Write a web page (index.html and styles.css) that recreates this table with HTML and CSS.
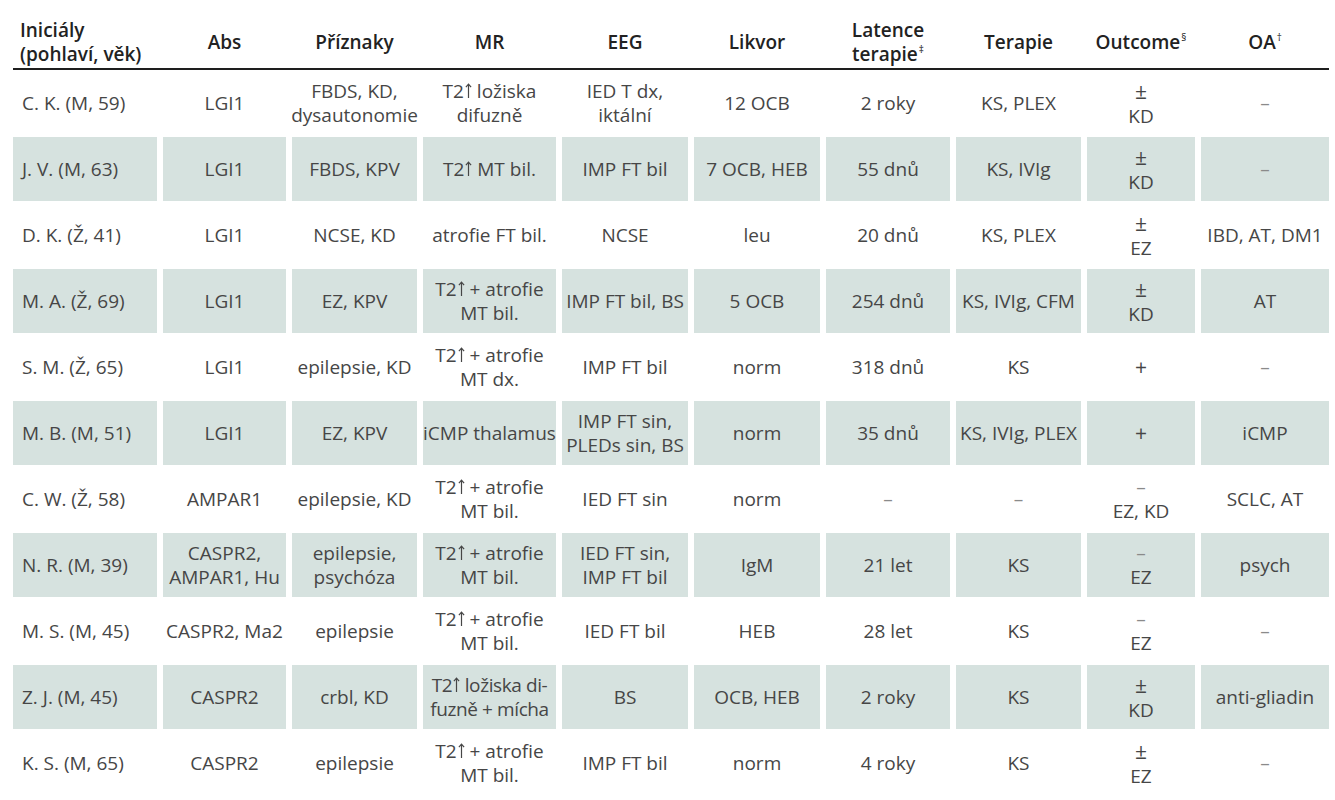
FILE: index.html
```html
<!DOCTYPE html>
<html lang="cs">
<head>
<meta charset="utf-8">
<title>Tabulka pacientů</title>
<link rel="stylesheet" href="styles.css">
</head>
<body>
<div class="table">
  <div class="thead">
    <div class="th first"><span>Iniciály<br>(pohlaví, věk)</span></div>
    <div class="th"><span>Abs</span></div>
    <div class="th"><span>Příznaky</span></div>
    <div class="th"><span>MR</span></div>
    <div class="th"><span>EEG</span></div>
    <div class="th"><span>Likvor</span></div>
    <div class="th"><span>Latence<br>terapie<sup>‡</sup></span></div>
    <div class="th"><span>Terapie</span></div>
    <div class="th"><span>Outcome<sup>§</sup></span></div>
    <div class="th"><span>OA<sup>†</sup></span></div>
  </div>
  <div class="tbody">
    <div class="row">
      <div class="td first"><span>C. K. (M, 59)</span></div>
      <div class="td"><span>LGI1</span></div>
      <div class="td"><span>FBDS, KD,<br>dysautonomie</span></div>
      <div class="td"><span>T2<svg class="up" viewBox="0 0 7 15"><path d="M3.5 15V1.2M0.9 4.2L3.5 1.2L6.1 4.2"/></svg> ložiska<br>difuzně</span></div>
      <div class="td"><span>IED T dx,<br>iktální</span></div>
      <div class="td"><span>12 OCB</span></div>
      <div class="td"><span>2 roky</span></div>
      <div class="td"><span>KS, PLEX</span></div>
      <div class="td"><span><span class="pm">±</span><br>KD</span></div>
      <div class="td dash"><span>–</span></div>
    </div>
    <div class="row alt">
      <div class="td first"><span>J. V. (M, 63)</span></div>
      <div class="td"><span>LGI1</span></div>
      <div class="td"><span>FBDS, KPV</span></div>
      <div class="td"><span>T2<svg class="up" viewBox="0 0 7 15"><path d="M3.5 15V1.2M0.9 4.2L3.5 1.2L6.1 4.2"/></svg> MT bil.</span></div>
      <div class="td"><span>IMP FT bil</span></div>
      <div class="td"><span>7 OCB, HEB</span></div>
      <div class="td"><span>55 dnů</span></div>
      <div class="td"><span>KS, IVIg</span></div>
      <div class="td"><span><span class="pm">±</span><br>KD</span></div>
      <div class="td dash"><span>–</span></div>
    </div>
    <div class="row">
      <div class="td first"><span>D. K. (Ž, 41)</span></div>
      <div class="td"><span>LGI1</span></div>
      <div class="td"><span>NCSE, KD</span></div>
      <div class="td"><span>atrofie FT bil.</span></div>
      <div class="td"><span>NCSE</span></div>
      <div class="td"><span>leu</span></div>
      <div class="td"><span>20 dnů</span></div>
      <div class="td"><span>KS, PLEX</span></div>
      <div class="td"><span><span class="pm">±</span><br>EZ</span></div>
      <div class="td"><span>IBD, AT, DM1</span></div>
    </div>
    <div class="row alt">
      <div class="td first"><span>M. A. (Ž, 69)</span></div>
      <div class="td"><span>LGI1</span></div>
      <div class="td"><span>EZ, KPV</span></div>
      <div class="td"><span>T2<svg class="up" viewBox="0 0 7 15"><path d="M3.5 15V1.2M0.9 4.2L3.5 1.2L6.1 4.2"/></svg> + atrofie<br>MT bil.</span></div>
      <div class="td"><span>IMP FT bil, BS</span></div>
      <div class="td"><span>5 OCB</span></div>
      <div class="td"><span>254 dnů</span></div>
      <div class="td"><span>KS, IVIg, CFM</span></div>
      <div class="td"><span><span class="pm">±</span><br>KD</span></div>
      <div class="td"><span>AT</span></div>
    </div>
    <div class="row">
      <div class="td first"><span>S. M. (Ž, 65)</span></div>
      <div class="td"><span>LGI1</span></div>
      <div class="td"><span>epilepsie, KD</span></div>
      <div class="td"><span>T2<svg class="up" viewBox="0 0 7 15"><path d="M3.5 15V1.2M0.9 4.2L3.5 1.2L6.1 4.2"/></svg> + atrofie<br>MT dx.</span></div>
      <div class="td"><span>IMP FT bil</span></div>
      <div class="td"><span>norm</span></div>
      <div class="td"><span>318 dnů</span></div>
      <div class="td"><span>KS</span></div>
      <div class="td"><span class="pm">+</span></div>
      <div class="td dash"><span>–</span></div>
    </div>
    <div class="row alt">
      <div class="td first"><span>M. B. (M, 51)</span></div>
      <div class="td"><span>LGI1</span></div>
      <div class="td"><span>EZ, KPV</span></div>
      <div class="td"><span>iCMP thalamus</span></div>
      <div class="td"><span>IMP FT sin,<br>PLEDs sin, BS</span></div>
      <div class="td"><span>norm</span></div>
      <div class="td"><span>35 dnů</span></div>
      <div class="td"><span>KS, IVIg, PLEX</span></div>
      <div class="td"><span class="pm">+</span></div>
      <div class="td"><span>iCMP</span></div>
    </div>
    <div class="row">
      <div class="td first"><span>C. W. (Ž, 58)</span></div>
      <div class="td"><span>AMPAR1</span></div>
      <div class="td"><span>epilepsie, KD</span></div>
      <div class="td"><span>T2<svg class="up" viewBox="0 0 7 15"><path d="M3.5 15V1.2M0.9 4.2L3.5 1.2L6.1 4.2"/></svg> + atrofie<br>MT bil.</span></div>
      <div class="td"><span>IED FT sin</span></div>
      <div class="td"><span>norm</span></div>
      <div class="td dash"><span>–</span></div>
      <div class="td dash"><span>–</span></div>
      <div class="td"><span><span class="dash">–</span><br>EZ, KD</span></div>
      <div class="td"><span>SCLC, AT</span></div>
    </div>
    <div class="row alt">
      <div class="td first"><span>N. R. (M, 39)</span></div>
      <div class="td"><span>CASPR2,<br>AMPAR1, Hu</span></div>
      <div class="td"><span>epilepsie,<br>psychóza</span></div>
      <div class="td"><span>T2<svg class="up" viewBox="0 0 7 15"><path d="M3.5 15V1.2M0.9 4.2L3.5 1.2L6.1 4.2"/></svg> + atrofie<br>MT bil.</span></div>
      <div class="td"><span>IED FT sin,<br>IMP FT bil</span></div>
      <div class="td"><span>IgM</span></div>
      <div class="td"><span>21 let</span></div>
      <div class="td"><span>KS</span></div>
      <div class="td"><span><span class="dash">–</span><br>EZ</span></div>
      <div class="td"><span>psych</span></div>
    </div>
    <div class="row">
      <div class="td first"><span>M. S. (M, 45)</span></div>
      <div class="td"><span>CASPR2, Ma2</span></div>
      <div class="td"><span>epilepsie</span></div>
      <div class="td"><span>T2<svg class="up" viewBox="0 0 7 15"><path d="M3.5 15V1.2M0.9 4.2L3.5 1.2L6.1 4.2"/></svg> + atrofie<br>MT bil.</span></div>
      <div class="td"><span>IED FT bil</span></div>
      <div class="td"><span>HEB</span></div>
      <div class="td"><span>28 let</span></div>
      <div class="td"><span>KS</span></div>
      <div class="td"><span><span class="dash">–</span><br>EZ</span></div>
      <div class="td dash"><span>–</span></div>
    </div>
    <div class="row alt">
      <div class="td first"><span>Z. J. (M, 45)</span></div>
      <div class="td"><span>CASPR2</span></div>
      <div class="td"><span>crbl, KD</span></div>
      <div class="td tight"><span>T2<svg class="up" viewBox="0 0 7 15"><path d="M3.5 15V1.2M0.9 4.2L3.5 1.2L6.1 4.2"/></svg> ložiska di-<br>fuzně + mícha</span></div>
      <div class="td"><span>BS</span></div>
      <div class="td"><span>OCB, HEB</span></div>
      <div class="td"><span>2 roky</span></div>
      <div class="td"><span>KS</span></div>
      <div class="td"><span><span class="pm">±</span><br>KD</span></div>
      <div class="td"><span>anti-gliadin</span></div>
    </div>
    <div class="row">
      <div class="td first"><span>K. S. (M, 65)</span></div>
      <div class="td"><span>CASPR2</span></div>
      <div class="td"><span>epilepsie</span></div>
      <div class="td"><span>T2<svg class="up" viewBox="0 0 7 15"><path d="M3.5 15V1.2M0.9 4.2L3.5 1.2L6.1 4.2"/></svg> + atrofie<br>MT bil.</span></div>
      <div class="td"><span>IMP FT bil</span></div>
      <div class="td"><span>norm</span></div>
      <div class="td"><span>4 roky</span></div>
      <div class="td"><span>KS</span></div>
      <div class="td"><span><span class="pm">±</span><br>EZ</span></div>
      <div class="td dash"><span>–</span></div>
    </div>
  </div>
</div>
</body>
</html>
```
FILE: styles.css
```css
html, body {
  margin: 0;
  padding: 0;
  background: #ffffff;
}

body {
  font-family: "Open Sans", "Noto Sans", "DejaVu Sans", sans-serif;
  font-size: 19px;
  line-height: 24px;
  color: #464646;
}

.table {
  width: 1316px;
  margin-left: 13px;
  padding-top: 8px;
}

.thead,
.row {
  display: grid;
  grid-template-columns: 144px 123px 125px 133px 126px 126px 124px 125px 108px 128px;
  column-gap: 6px;
}

.thead {
  height: 62px;
  box-sizing: border-box;
  padding-top: 7px;
  border-bottom: 2px solid #1e1e1e;
}

.th {
  display: flex;
  align-items: center;
  justify-content: center;
  color: #222222;
  font-weight: 600;
  text-align: center;
  white-space: nowrap;
}

.th.first {
  justify-content: flex-start;
  text-align: left;
  padding-left: 7px;
}

.th sup {
  font-size: 10px;
  line-height: 0;
  vertical-align: 8px;
  font-weight: 400;
  margin-left: 1px;
}

.tbody {
  display: flex;
  flex-direction: column;
  gap: 2px;
  padding-top: 1px;
}

.row {
  height: 64px;
}

.td {
  display: flex;
  align-items: center;
  justify-content: center;
  text-align: center;
  white-space: nowrap;
}

.row.alt .td {
  background: #d6e2df;
}

.td.first {
  justify-content: flex-start;
  text-align: left;
  padding-left: 9px;
}

.td.tight {
  letter-spacing: -0.4px;
}

.dash {
  color: #8a8a8a;
}

.pm {
  font-size: 21px;
}

.up {
  width: 7px;
  height: 15px;
  margin-left: 1px;
  vertical-align: baseline;
  fill: none;
  stroke: currentColor;
  stroke-width: 1.2;
}
```
